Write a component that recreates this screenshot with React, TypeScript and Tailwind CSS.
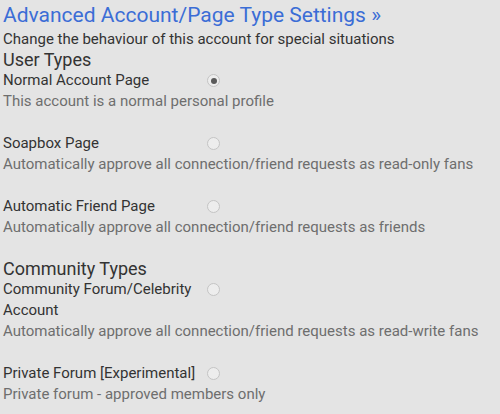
import React from "react";

function Radio({ checked }: { checked?: boolean }) {
  return (
    <span className="mt-[4px] flex h-[13px] w-[13px] shrink-0 items-center justify-center rounded-full border border-[#c4c4c4] bg-[#ededed]">
      {checked && <span className="h-[6px] w-[6px] rounded-full bg-[#5a5a5a]" />}
    </span>
  );
}

function Field({ label, desc, checked }: { label: string; desc: string; checked?: boolean }) {
  return (
    <div className="mb-[21px]">
      <div className="flex items-start">
        <div className="w-[204px] text-[15px] leading-[21px] text-[#333]">{label}</div>
        <Radio checked={checked} />
      </div>
      <div className="text-[15px] leading-[21px] text-[#6e6e6e]">{desc}</div>
    </div>
  );
}

export default function App() {
  return (
    <div
      className="h-[414px] w-[500px] overflow-hidden bg-[#e4e4e4] pl-[3px] pt-[1px]"
      style={{ fontFamily: "Roboto, sans-serif" }}
    >
      <h3 className="text-[21px] leading-[28px] text-[#3b6dd6]">Advanced Account/Page Type Settings »</h3>
      <div className="text-[15px] leading-[21px] text-[#333]">Change the behaviour of this account for special situations</div>
      <h4 className="text-[18px] leading-[20px] text-[#333]">User Types</h4>
      <Field label="Normal Account Page" desc="This account is a normal personal profile" checked />
      <Field label="Soapbox Page" desc="Automatically approve all connection/friend requests as read-only fans" />
      <Field label="Automatic Friend Page" desc="Automatically approve all connection/friend requests as friends" />
      <h4 className="mt-[1px] text-[18px] leading-[20px] text-[#333]">Community Types</h4>
      <Field label="Community Forum/Celebrity Account" desc="Automatically approve all connection/friend requests as read-write fans" />
      <Field label="Private Forum [Experimental]" desc="Private forum - approved members only" />
    </div>
  );
}
